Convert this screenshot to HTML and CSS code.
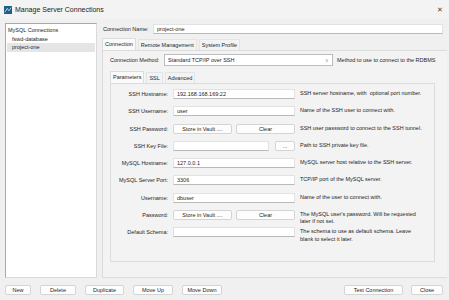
FILE: index.html
```html
<!DOCTYPE html>
<html lang="en">
<head>
  <meta charset="UTF-8">
  <title>Manage Server Connections</title>
  <link rel="stylesheet" href="styles.css">
</head>
<body>
  <div class="window">
    <div class="titlebar">
      <svg class="app-icon" viewBox="0 0 10 10">
        <rect x="0" y="0" width="10" height="10" fill="#1d5f8a"></rect>
        <path d="M1 8 L4 3 L6 6 L9 2" stroke="#cfe6f5" stroke-width="1" fill="none"></path>
      </svg>
      <span class="title">Manage Server Connections</span>
      <span class="close">&#x2715;</span>
    </div>

    <div class="main">
      <div class="conn-list">
        <div class="conn-root">MySQL Connections</div>
        <div class="conn-item">fswd-database</div>
        <div class="conn-item selected">project-one</div>
      </div>

      <div class="detail">
        <div class="name-row">
          <span class="name-label">Connection Name:</span>
          <div class="input name-input">project-one</div>
        </div>

        <div class="tabs">
          <span class="tab active">Connection</span>
          <span class="tab">Remote Management</span>
          <span class="tab">System Profile</span>
        </div>

        <div class="tab-panel">
          <div class="method-row">
            <span class="method-label">Connection Method:</span>
            <div class="input select">Standard TCP/IP over SSH<span class="chev">&#x2228;</span></div>
            <span class="desc">Method to use to connect to the RDBMS</span>
          </div>

          <div class="tabs inner-tabs">
            <span class="tab active">Parameters</span>
            <span class="tab">SSL</span>
            <span class="tab">Advanced</span>
          </div>

          <div class="inner-panel">
            <div class="form">
              <span class="label">SSH Hostname:</span>
              <div class="input">192.168.168.169:22</div>
              <span class="desc">SSH server hostname, with &nbsp;optional port number.</span>

              <span class="label">SSH Username:</span>
              <div class="input">user</div>
              <span class="desc">Name of the SSH user to connect with.</span>

              <span class="label">SSH Password:</span>
              <div class="btn-pair">
                <span class="btn">Store in Vault ....</span>
                <span class="btn">Clear</span>
              </div>
              <span class="desc">SSH user password to connect to the SSH tunnel.</span>

              <span class="label">SSH Key File:</span>
              <div class="file-pick">
                <div class="input"></div>
                <span class="btn">...</span>
              </div>
              <span class="desc">Path to SSH private key file.</span>

              <span class="label">MySQL Hostname:</span>
              <div class="input">127.0.0.1</div>
              <span class="desc">MySQL server host relative to the SSH server.</span>

              <span class="label">MySQL Server Port:</span>
              <div class="input">3306</div>
              <span class="desc">TCP/IP port of the MySQL server.</span>

              <span class="label">Username:</span>
              <div class="input">dbuser</div>
              <span class="desc">Name of the user to connect with.</span>

              <span class="label">Password:</span>
              <div class="btn-pair">
                <span class="btn">Store in Vault ....</span>
                <span class="btn">Clear</span>
              </div>
              <span class="desc">The MySQL user's password. Will be requested later if not set.</span>

              <span class="label">Default Schema:</span>
              <div class="input"></div>
              <span class="desc">The schema to use as default schema. Leave blank to select it later.</span>
            </div>
          </div>
        </div>
      </div>
    </div>

    <div class="footer">
      <div class="btn-group">
        <span class="btn foot-btn w-new">New</span>
        <span class="btn foot-btn w-del">Delete</span>
        <span class="btn foot-btn w-dup">Duplicate</span>
        <span class="btn foot-btn w-up">Move Up</span>
        <span class="btn foot-btn w-down">Move Down</span>
      </div>
      <div class="btn-group right">
        <span class="btn foot-btn w-test">Test Connection</span>
        <span class="btn foot-btn w-close">Close</span>
      </div>
    </div>
  </div>
</body>
</html>
```

FILE: styles.css
```css
* {
  box-sizing: border-box;
}

body {
  margin: 0;
  background-color: #f0f0f0;
  font-family: "Liberation Sans", Arial, sans-serif;
  font-size: 5.5px;
  color: #1e1e1e;
}

.window {
  width: 449px;
  height: 300px;
  display: flex;
  flex-direction: column;
  overflow: hidden;
}

.titlebar {
  height: 19px;
  display: flex;
  align-items: center;
  padding: 0 6px 0 4px;
  background-color: #f3f3f3;
}

.app-icon {
  width: 8px;
  height: 8px;
  margin-right: 3px;
}

.title {
  font-size: 7px;
  color: #222;
  flex: 1;
}

.close {
  font-size: 7px;
  color: #444;
}

.main {
  display: flex;
  padding: 4px 2px 0 5px;
  gap: 5px;
  height: 260px;
}

.conn-list {
  width: 92px;
  height: 255px;
  background: #ffffff;
  border: 1px solid #a9a9a9;
  border-right-color: #dadada;
  border-bottom-color: #dadada;
  padding: 2px 1px;
}

.conn-root {
  padding-left: 1px;
  line-height: 8.5px;
}

.conn-item {
  padding-left: 5px;
  line-height: 8.5px;
}

.conn-item.selected {
  background-color: #e5e5e5;
}

.detail {
  flex: 1;
  display: flex;
  flex-direction: column;
}

.name-row {
  display: flex;
  align-items: center;
  padding: 0 4px 0 1px;
  height: 11px;
}

.name-label {
  width: 50px;
}

.input {
  height: 10px;
  line-height: 9px;
  background: #ffffff;
  border: 1px solid #e2e2e2;
  border-bottom-color: #b9b9b9;
  padding: 0 3px;
  white-space: nowrap;
  overflow: hidden;
}

.name-input {
  flex: 1;
}

.tabs {
  display: flex;
  align-items: flex-end;
  margin-top: 4px;
  height: 12px;
  gap: 2px;
}

.tab {
  line-height: 10px;
  padding: 0 2px;
  background-color: #f3f3f3;
  border: 1px solid #e4e4e4;
  border-bottom: none;
}

.tab.active {
  background-color: #fafafa;
  line-height: 11px;
  border-color: #dcdcdc;
}

.tab-panel {
  height: 228px;
  border: 1px solid #dcdcdc;
  border-right: none;
  background-color: #f3f3f3;
  padding: 3px 6px 0 7px;
}

.method-row {
  display: flex;
  align-items: center;
  height: 12px;
}

.method-label {
  width: 54px;
}

.select {
  width: 169px;
  height: 12px;
  line-height: 10px;
  border-color: #bdbdbd;
  display: flex;
  justify-content: space-between;
}

.chev {
  color: #999;
  font-size: 5px;
}

.method-row .desc {
  margin-left: 4px;
}

.inner-tabs {
  margin-top: 5px;
}

.inner-panel {
  width: 325px;
  height: 179px;
  border: 1px solid #dcdcdc;
  padding-top: 5px;
}

.form {
  display: grid;
  grid-template-columns: 57px 122px 124px;
  column-gap: 5px;
  grid-auto-rows: 17.25px;
  align-items: start;
}

.label {
  text-align: right;
  line-height: 10px;
}

.desc {
  line-height: 7.5px;
  padding-top: 1px;
}

.btn-pair {
  display: grid;
  grid-template-columns: 59px 59px;
  column-gap: 4px;
  width: 122px;
}

.file-pick {
  display: flex;
  gap: 6px;
}

.file-pick .input {
  width: 96px;
}

.file-pick .btn {
  flex: 1;
}

.btn {
  display: block;
  height: 10px;
  line-height: 8px;
  text-align: center;
  background-color: #fdfdfd;
  border: 1px solid #d4d4d4;
  border-radius: 2px;
}

.footer {
  display: flex;
  justify-content: space-between;
  padding: 6px 6px 0 5px;
}

.btn-group {
  display: flex;
  gap: 9px;
}

.btn-group.right {
  gap: 8px;
}

.foot-btn {
  height: 10px;
}

.w-new { width: 26px; }
.w-del { width: 36px; }
.w-dup { width: 39px; }
.w-up { width: 40px; }
.w-down { width: 40px; }
.w-test { width: 59px; }
.w-close { width: 32px; }
```
